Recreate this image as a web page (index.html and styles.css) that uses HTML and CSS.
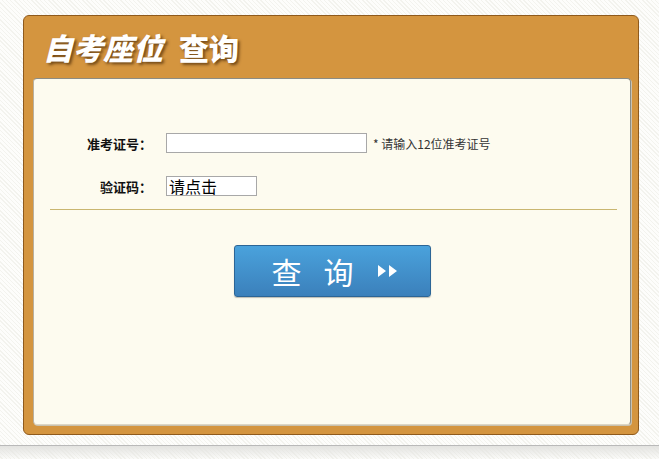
FILE: index.html
```
<!DOCTYPE html>
<html lang="zh-CN">
<head>
  <meta charset="UTF-8">
  <title>自考座位查询</title>
  <link rel="stylesheet" href="styles.css">
</head>
<body>
  <div class="page">
    <div class="panel">
      <h1 class="panel-title"><em>自考座位</em> 查询</h1>
      <div class="panel-body">
        <form class="query-form">
          <div class="form-row">
            <label class="form-label">准考证号：</label>
            <input class="field field-id" type="text">
            <span class="hint">* 请输入12位准考证号</span>
          </div>
          <div class="form-row">
            <label class="form-label">验证码：</label>
            <input class="field field-code" type="text" value="请点击">
          </div>
        </form>
        <div class="divider"></div>
        <div class="actions">
          <button class="btn-query" type="button">
            <span class="btn-text">查</span><span class="btn-text">询</span>
            <svg class="arrows" width="22" height="14" viewBox="0 0 22 14">
              <path d="M1 1 L9 7 L1 13 Z M12 1 L20 7 L12 13 Z" fill="#fff"/>
            </svg>
          </button>
        </div>
      </div>
    </div>
  </div>
  <div class="footer"></div>
</body>
</html>
```

FILE: styles.css
```
body {
  margin: 0;
  font-family: "Liberation Sans", "Noto Sans CJK SC", sans-serif;
  background-color: #fbfbf8;
  background-image: repeating-linear-gradient(45deg, #fdfdfb 0 2px, #f3f3ee 2px 3px);
}

.page {
  padding: 15px 0 0 23px;
  height: 430px;
  box-sizing: border-box;
}

/* Orange frame */
.panel {
  width: 616px;
  height: 420px;
  box-sizing: border-box;
  background: #d4953f;
  border: 1px solid #8f5a1c;
  border-radius: 6px;
  padding: 0 7px 9px 9px;
  display: flex;
  flex-direction: column;
}

.panel-title {
  margin: 0;
  height: 62px;
  padding-left: 10px;
  box-sizing: border-box;
  display: flex;
  align-items: center;
  font-family: "Noto Sans CJK SC", sans-serif;
  font-size: 30px;
  font-weight: 900;
  color: #fff;
  text-shadow: 2px 2px 3px rgba(60, 30, 0, 0.65);
}

.panel-title em {
  font-style: italic;
  margin-right: 16px;
}

/* Cream content area */
.panel-body {
  flex: 1;
  background: #fdfbef;
  border: 1px solid #8c8c84;
  border-left-color: #b8b0a0;
  border-bottom-color: #ddd6c4;
  border-radius: 4px;
  box-shadow: 1px 1px 0 #c9c2b0;
}

.query-form {
  padding-top: 54px;
  display: flex;
  flex-direction: column;
  gap: 23px;
}

.form-row {
  display: flex;
  align-items: center;
}

.form-label {
  width: 118px;
  text-align: right;
  margin-right: 14px;
  font-family: "Noto Sans CJK SC", sans-serif;
  font-size: 13px;
  font-weight: 700;
  color: #111;
}

.field {
  height: 20px;
  box-sizing: border-box;
  border: 1px solid #a8a8a8;
  background: #fff;
  padding: 0 2px;
  margin: 0;
}

.field-id {
  width: 201px;
}

.field-code {
  width: 91px;
  font-family: "Noto Sans CJK SC", sans-serif;
  font-size: 16px;
  color: #000;
  line-height: 18px;
}

.hint {
  margin-left: 6px;
  font-family: "Noto Sans CJK SC", sans-serif;
  font-size: 12px;
  color: #333;
}

.divider {
  height: 1px;
  background: #c9b670;
  margin: 13px 13px 0 16px;
}

.actions {
  display: flex;
  justify-content: center;
  padding-top: 35px;
}

.btn-query {
  width: 197px;
  height: 52px;
  border: 1px solid #2c6596;
  border-radius: 3px;
  background: linear-gradient(#4aa2dc, #3b80bb);
  box-shadow: 0 1px 1px rgba(0, 0, 0, 0.25);
  color: #fff;
  font-family: "Noto Sans CJK SC", sans-serif;
  font-size: 30px;
  padding: 0 0 0 6px;
  display: flex;
  align-items: center;
  justify-content: center;
  gap: 22px;
  cursor: pointer;
}

.arrows {
  display: block;
  margin-left: 1px;
}

.footer {
  margin-top: 15px;
  height: 14px;
  border-top: 1px solid #b9b9b9;
  background: linear-gradient(#e3e3e0, rgba(255, 255, 255, 0));
}
```
